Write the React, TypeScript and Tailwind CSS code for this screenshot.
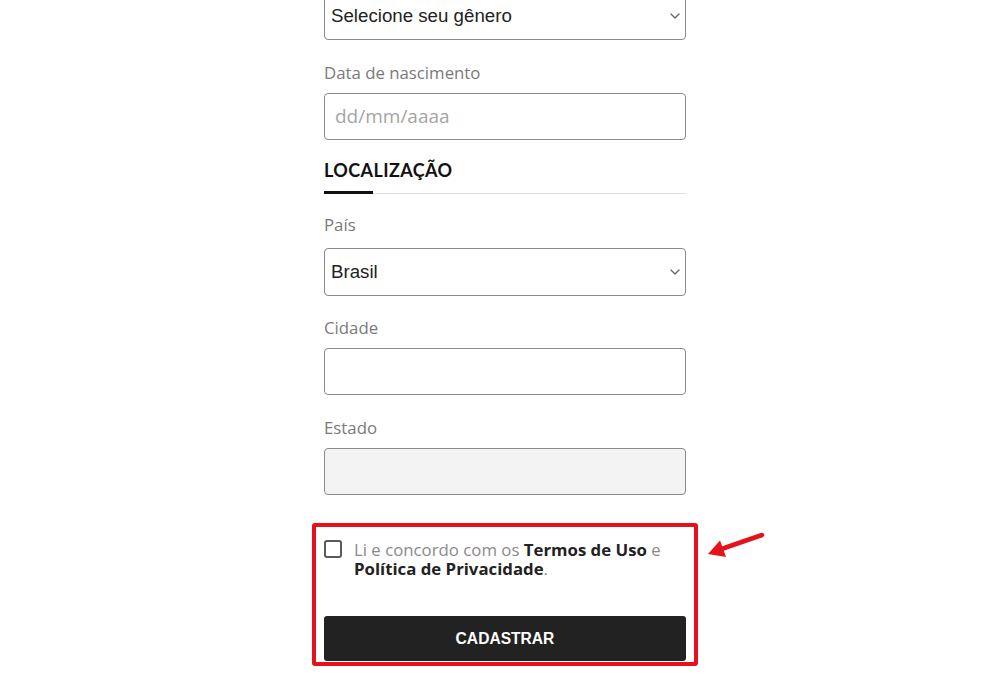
import React from "react";

const Chevron = () => (
  <svg width="10" height="6" viewBox="0 0 10 6" className="shrink-0">
    <path d="M1 1 L5 5 L9 1" fill="none" stroke="#666" strokeWidth="1.4" strokeLinecap="round" strokeLinejoin="round" />
  </svg>
);

const SelectBox = ({ text, className = "" }: { text: string; className?: string }) => (
  <div
    className={`h-[48px] border-[1.5px] border-[#8a8a8a] rounded-[4px] bg-white flex items-center justify-between pl-[6px] pr-[5px] ${className}`}
  >
    <span className="text-[18.7px] text-[#222]" style={{ fontFamily: '"Liberation Sans", Arial, sans-serif' }}>
      {text}
    </span>
    <Chevron />
  </div>
);

const Label = ({ children, className = "" }: { children: React.ReactNode; className?: string }) => (
  <div className={`text-[16.8px] leading-[20px] text-[#7a7a7a] ${className}`}>{children}</div>
);

const Input = ({ placeholder, disabled, className = "" }: { placeholder?: string; disabled?: boolean; className?: string }) => (
  <div
    className={`h-[47px] border-[1.5px] border-[#8a8a8a] rounded-[4px] flex items-center pl-[10px] ${
      disabled ? "bg-[#f3f3f3]" : "bg-white"
    } ${className}`}
  >
    {placeholder && <span className="text-[19px] text-[#a5a5a5]">{placeholder}</span>}
  </div>
);

export default function App() {
  return (
    <div className="relative min-h-[675px] bg-white overflow-hidden" style={{ fontFamily: '"Open Sans", "Noto Sans", sans-serif' }}>
      <div className="ml-[324px] w-[362px] flex flex-col">
        <SelectBox text="Selecione seu gênero" className="-mt-[8px]" />

        <Label className="mt-[23px]">Data de nascimento</Label>
        <Input placeholder="dd/mm/aaaa" className="mt-[10px]" />

        <div
          className="mt-[20px] text-[18px] leading-[20px] font-bold text-[#111] tracking-[0.4px]"
          style={{ fontFamily: 'Lato, "Open Sans", sans-serif' }}
        >
          LOCALIZAÇÃO
        </div>
        <div className="mt-[11px] flex items-end">
          <div className="w-[49px] h-[3px] bg-[#111]" />
          <div className="flex-1 h-px bg-[#e2e2e2]" />
        </div>

        <Label className="mt-[21px]">País</Label>
        <SelectBox text="Brasil" className="mt-[13px]" />

        <Label className="mt-[22px]">Cidade</Label>
        <Input className="mt-[10px]" />

        <Label className="mt-[23px]">Estado</Label>
        <Input disabled className="mt-[10px]" />

        <div className="mt-[28px] -ml-[12px] w-[386px] border-4 border-[#e5121b] rounded-[3px] px-[8px] pt-[13px] pb-[1px]">
          <div className="flex items-start gap-[12px]">
            <div className="w-[18px] h-[18px] shrink-0 border-[2px] border-[#5a5a5a] rounded-[3px] bg-white" />
            <div className="text-[16.8px] leading-[19px] text-[#8a8a8a]">
              Li e concordo com os <span className="font-bold text-[#222]">Termos de Uso</span> e{" "}
              <span className="font-bold text-[#222]">Política de Privacidade</span>.
            </div>
          </div>
          <button
            className="mt-[38px] w-full h-[45px] bg-[#222222] rounded-[3px] text-white font-bold text-[15.6px] flex items-center justify-center"
            style={{ fontFamily: '"Liberation Sans", Arial, sans-serif' }}
          >
            CADASTRAR
          </button>
        </div>
      </div>

      <svg className="absolute left-[700px] top-[525px]" width="70" height="40" viewBox="0 0 70 40">
        <line x1="62" y1="10" x2="20" y2="24.5" stroke="#e5121b" strokeWidth="4.5" strokeLinecap="round" />
        <polygon points="8,29 20,15.5 26,32" fill="#e5121b" />
      </svg>
    </div>
  );
}
